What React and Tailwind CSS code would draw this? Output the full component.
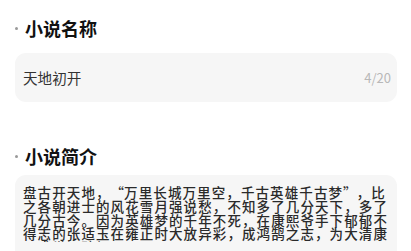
const font = { fontFamily: '"Noto Sans CJK SC", "Noto Sans", sans-serif' }

function Quote({ open }) {
  // Full-width CJK quote cell: opening mark sits right, closing mark sits left.
  return <span className={`inline-block w-[13.5px] ${open ? 'text-right' : 'text-left'}`}>{open ? '“' : '”'}</span>
}

function SectionTitle({ children }) {
  return (
    <div className="flex h-6 items-center">
      <span className="h-[3px] w-[3px] rounded-full bg-[#9a9a9a]" />
      <h2 className="ml-[7px] text-[18px] font-bold leading-6 text-[#111]">{children}</h2>
    </div>
  )
}

export default function App() {
  return (
    <div lang="zh-CN" className="h-[251px] overflow-hidden bg-white pl-[15px] pr-[14px] pt-4" style={font}>
      <SectionTitle>小说名称</SectionTitle>
      <div className="mt-[13px] flex h-[49px] items-center justify-between rounded-[11px] bg-[#f6f6f6] pl-2 pr-[6px]">
        <span className="text-[14.6px] text-[#333]">天地初开</span>
        <span className="text-[13px] text-[#b8b8b8]">4/20</span>
      </div>

      <div className="mt-[42px]">
        <SectionTitle>小说简介</SectionTitle>
      </div>
      <div className="mt-[7px] h-[140px] rounded-[11px] bg-[#f6f6f6] pl-2 pr-1 pt-[11px]">
        <p className="h-[56px] overflow-hidden text-[13.5px] font-medium leading-[13.8px] tracking-[1.1px] text-[#2a2a2a]">
          盘古开天地，<Quote open />万里长城万里空，千古英雄千古梦<Quote />，比之各朝进士的风花雪月强说愁，不知多了几分天下，多了几分古今。因为英雄梦的千年不死，在康熙爷手下郁郁不得志的张适玉在雍正时大放异彩，成鸿鹄之志，为大清康熙盛世添砖加瓦。
        </p>
      </div>
    </div>
  )
}
